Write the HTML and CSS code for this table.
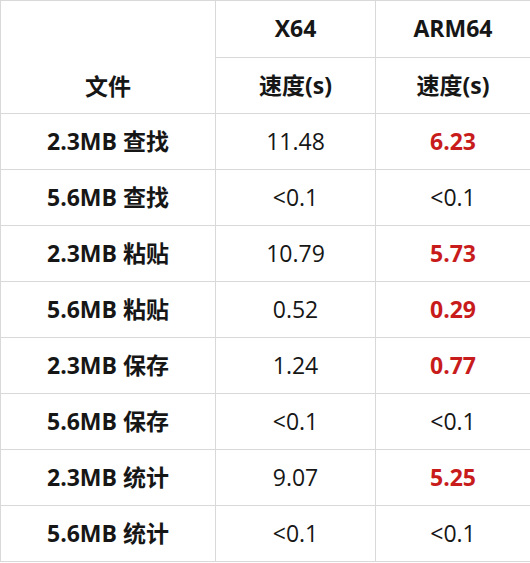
FILE: index.html
```html
<!DOCTYPE html>
<html lang="zh">
<head>
<meta charset="utf-8">
<link rel="stylesheet" href="styles.css">
</head>
<body>
<table class="perf">
  <colgroup>
    <col class="c-file">
    <col class="c-x64">
    <col class="c-arm">
  </colgroup>
  <thead>
    <tr class="r-top">
      <th rowspan="2" class="file-head">文件</th>
      <th>X64</th>
      <th>ARM64</th>
    </tr>
    <tr>
      <th>速度(s)</th>
      <th>速度(s)</th>
    </tr>
  </thead>
  <tbody>
    <tr><th>2.3MB 查找</th><td>11.48</td><td class="fast">6.23</td></tr>
    <tr><th>5.6MB 查找</th><td>&lt;0.1</td><td>&lt;0.1</td></tr>
    <tr><th>2.3MB 粘贴</th><td>10.79</td><td class="fast">5.73</td></tr>
    <tr><th>5.6MB 粘贴</th><td>0.52</td><td class="fast">0.29</td></tr>
    <tr><th>2.3MB 保存</th><td>1.24</td><td class="fast">0.77</td></tr>
    <tr><th>5.6MB 保存</th><td>&lt;0.1</td><td>&lt;0.1</td></tr>
    <tr><th>2.3MB 统计</th><td>9.07</td><td class="fast">5.25</td></tr>
    <tr><th>5.6MB 统计</th><td>&lt;0.1</td><td>&lt;0.1</td></tr>
  </tbody>
</table>
</body>
</html>
```

FILE: styles.css
```css
html, body {
  margin: 0;
  padding: 0;
  background: #ffffff;
}

.perf {
  border-collapse: collapse;
  table-layout: fixed;
  width: 530px;
  font-family: "Open Sans", "Noto Sans CJK SC", sans-serif;
  font-size: 23px;
  color: #161616;
}

.c-file { width: 215px; }
.c-x64 { width: 160px; }
.c-arm { width: 155px; }

.perf th,
.perf td {
  border: 1px solid #d9d9d9;
  height: 54px;
  padding: 0 0 1px;
  text-align: center;
  vertical-align: middle;
  line-height: 1;
}

.perf th {
  font-weight: 700;
}

.perf td {
  font-weight: 400;
}

.perf .r-top th {
  height: 55px;
}

.perf .file-head {
  vertical-align: bottom;
  padding-bottom: 15px;
}

.perf td.fast {
  color: #c81c1c;
  font-weight: 700;
}
```
